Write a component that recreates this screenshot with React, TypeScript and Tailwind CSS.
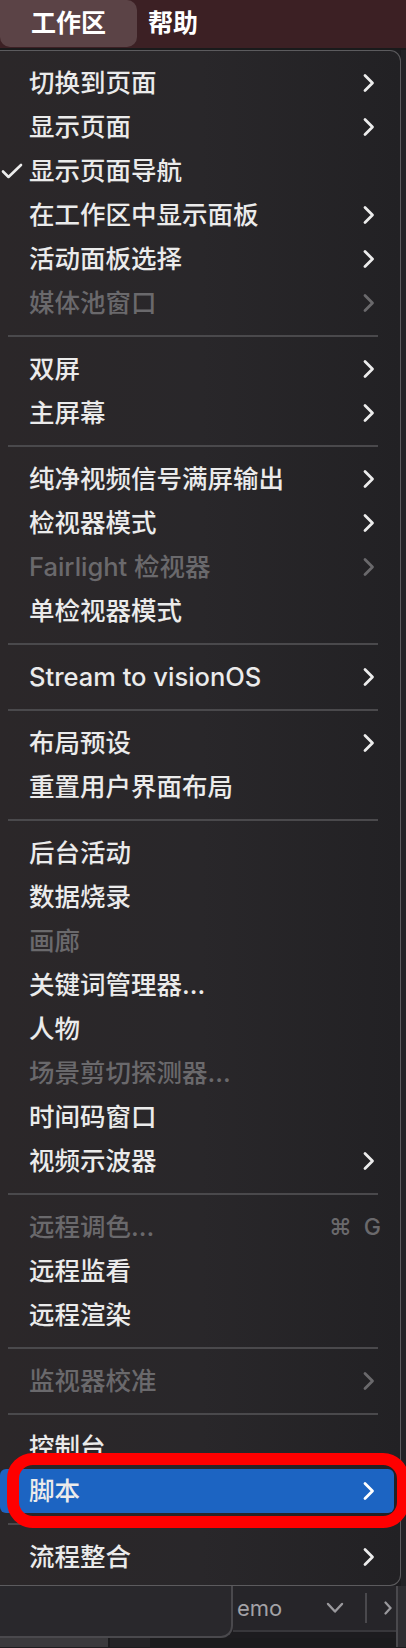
import React from "react";

type Item =
  | { kind: "sep" }
  | {
      kind: "item";
      label: string;
      sub?: boolean;
      disabled?: boolean;
      checked?: boolean;
      shortcut?: boolean;
      active?: boolean;
    };

const items: Item[] = [
  { kind: "item", label: "切换到页面", sub: true },
  { kind: "item", label: "显示页面", sub: true },
  { kind: "item", label: "显示页面导航", checked: true },
  { kind: "item", label: "在工作区中显示面板", sub: true },
  { kind: "item", label: "活动面板选择", sub: true },
  { kind: "item", label: "媒体池窗口", sub: true, disabled: true },
  { kind: "sep" },
  { kind: "item", label: "双屏", sub: true },
  { kind: "item", label: "主屏幕", sub: true },
  { kind: "sep" },
  { kind: "item", label: "纯净视频信号满屏输出", sub: true },
  { kind: "item", label: "检视器模式", sub: true },
  { kind: "item", label: "Fairlight 检视器", sub: true, disabled: true },
  { kind: "item", label: "单检视器模式" },
  { kind: "sep" },
  { kind: "item", label: "Stream to visionOS", sub: true },
  { kind: "sep" },
  { kind: "item", label: "布局预设", sub: true },
  { kind: "item", label: "重置用户界面布局" },
  { kind: "sep" },
  { kind: "item", label: "后台活动" },
  { kind: "item", label: "数据烧录" },
  { kind: "item", label: "画廊", disabled: true },
  { kind: "item", label: "关键词管理器..." },
  { kind: "item", label: "人物" },
  { kind: "item", label: "场景剪切探测器...", disabled: true },
  { kind: "item", label: "时间码窗口" },
  { kind: "item", label: "视频示波器", sub: true },
  { kind: "sep" },
  { kind: "item", label: "远程调色...", disabled: true, shortcut: true },
  { kind: "item", label: "远程监看" },
  { kind: "item", label: "远程渲染" },
  { kind: "sep" },
  { kind: "item", label: "监视器校准", sub: true, disabled: true },
  { kind: "sep" },
  { kind: "item", label: "控制台" },
  { kind: "item", label: "脚本", sub: true, active: true },
  { kind: "sep" },
  { kind: "item", label: "流程整合", sub: true },
];

function Chevron({ color }: { color: string }) {
  return (
    <svg width="12" height="20" viewBox="0 0 12 20" fill="none">
      <path
        d="M2 2.5 L9.5 10 L2 17.5"
        stroke={color}
        strokeWidth="2.8"
        strokeLinecap="round"
        strokeLinejoin="round"
      />
    </svg>
  );
}

function Check() {
  return (
    <svg width="22" height="16" viewBox="0 0 22 16" fill="none">
      <path
        d="M2 8.5 L7.5 14 L20 2"
        stroke="#ececec"
        strokeWidth="2.6"
        strokeLinecap="round"
        strokeLinejoin="round"
      />
    </svg>
  );
}

export default function App() {
  return (
    <div className="relative w-[406px] h-[1648px] overflow-hidden bg-[#1d1c1f] font-['Inter','Noto_Sans_CJK_SC',sans-serif]">
      {/* menu bar */}
      <div className="h-[48px] bg-[#3c2024] flex items-center">
        <div className="h-[47px] w-[137px] self-start rounded-b-[10px] rounded-tr-[10px] bg-[#5b4346] flex items-center pl-[31px] text-[25px] font-semibold text-white">
          工作区
        </div>
        <div className="pl-[11px] text-[25px] font-semibold text-white">帮助</div>
      </div>
      <div className="h-[2px] bg-[#1a1a1b]" />

      {/* menu */}
      <div className="flex">
        <div className="w-[401px] rounded-tr-[11px] rounded-br-[11px] border-t border-r border-b border-[#5c5b5e] bg-gradient-to-r from-[#2b2729] via-[#29272a] to-[#222124] pt-[10px] pb-[6px]">
          {items.map((it, i) =>
            it.kind === "sep" ? (
              <div key={i} className="ml-[8px] w-[370px] h-[2px] my-[10px] bg-[#4a494c]" />
            ) : (
              <div
                key={i}
                className={`mr-[6px] h-[44px] rounded-[6px] flex items-center pr-[19px] ${
                  it.active ? "bg-[#1c64c2]" : ""
                }`}
              >
                <div className="w-[29px] h-full flex items-center justify-start pl-[1px]">
                  {it.checked ? <Check /> : null}
                </div>
                <div
                  className={`flex-1 text-[25.5px] leading-none font-medium whitespace-nowrap ${
                    it.disabled ? "text-[#6a696c]" : "text-[#ebebeb]"
                  }`}
                >
                  {it.label}
                </div>
                {it.shortcut ? (
                  <div className="text-[23px] font-medium text-[#6a696c] -mr-[9px] tracking-[3px]">⌘ G</div>
                ) : it.sub ? (
                  <Chevron color={it.disabled ? "#6a696c" : it.active ? "#ffffff" : "#ececec"} />
                ) : null}
              </div>
            )
          )}
        </div>
        <div className="flex-1 bg-[#232226]" />
      </div>

      {/* bottom app UI */}
      <div className="flex">
        <div className="w-[396px] flex flex-col">
          <div className="flex items-start">
            <div className="w-[233px] h-[52px] rounded-br-[12px] border-r-2 border-b-2 border-[#4a494d] bg-[#29282c]" />
            <div className="flex-1 h-[46px] border-b-2 border-[#38373b] bg-[#262529] flex items-center">
              <span className="pl-[4px] text-[22px] text-[#a3a2a6] font-['Inter',sans-serif]">emo</span>
              <svg className="ml-[44px]" width="18" height="12" viewBox="0 0 18 12" fill="none">
                <path d="M2 2 L9 9.5 L16 2" stroke="#9a999d" strokeWidth="2.4" strokeLinecap="round" strokeLinejoin="round" />
              </svg>
              <div className="ml-[21px] w-[2px] h-[30px] bg-[#4a494d]" />
              <svg className="ml-[17px]" width="8" height="14" viewBox="0 0 8 14" fill="none">
                <path d="M1.5 1.5 L6.5 7 L1.5 12.5" stroke="#9a999d" strokeWidth="2.2" strokeLinecap="round" />
              </svg>
            </div>
          </div>
          <div className="flex h-[9px]">
            <div className="w-[108px] bg-[#3a393c]" />
            <div className="w-[2px] bg-[#1a1a1c]" />
            <div className="w-[40px] bg-[#252427]" />
            <div className="flex-1 bg-[#1b1b1d]" />
          </div>
        </div>
        <div className="w-[2px] bg-[#4a494d]" />
        <div className="flex-1 bg-[#2e2d31]" />
      </div>

      {/* annotation */}
      <div className="absolute left-[7px] top-[1453px] w-[402px] h-[75px] rounded-[26px] border-[12px] border-[#ff0000]" />
    </div>
  );
}
